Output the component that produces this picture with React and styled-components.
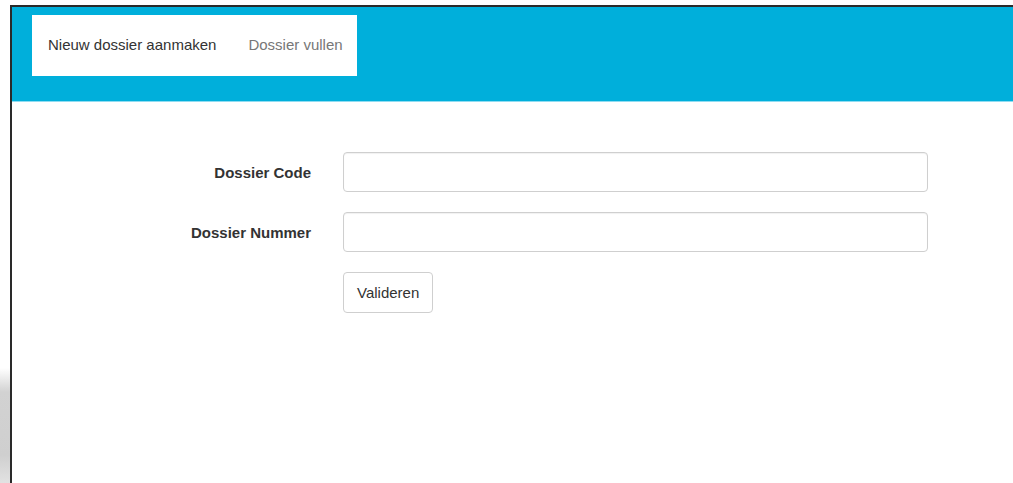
import React, { useState } from "react";
import styled, { createGlobalStyle } from "styled-components";

const GlobalStyle = createGlobalStyle`
    html, body {
        margin: 0;
        padding: 0;
        background: #fff;
    }
    body {
        font-family: "Liberation Sans", Arial, Helvetica, sans-serif;
        font-size: 15px;
        color: #333;
    }
    * {
        box-sizing: border-box;
    }
`;

function App() {
    const [dossierCode, setDossierCode] = useState("");
    const [dossierNummer, setDossierNummer] = useState("");

    const onValidate = (e) => {
        e.preventDefault();
    };

    return (
        <>
            <GlobalStyle />
            <Screen>
                <Gutter />
                <Frame>
                    <Header>
                        <Nav>
                            <NavLink href="#" $active>
                                Nieuw dossier aanmaken
                            </NavLink>
                            <NavLink href="#">Dossier vullen</NavLink>
                        </Nav>
                    </Header>

                    <Form onSubmit={onValidate}>
                        <Label htmlFor="dossier-code">Dossier Code</Label>
                        <Input
                            id="dossier-code"
                            type="text"
                            value={dossierCode}
                            onChange={(e) => setDossierCode(e.target.value)}
                        />

                        <Label htmlFor="dossier-nummer">Dossier Nummer</Label>
                        <Input
                            id="dossier-nummer"
                            type="text"
                            value={dossierNummer}
                            onChange={(e) => setDossierNummer(e.target.value)}
                        />

                        <ButtonCell>
                            <Button type="submit">Valideren</Button>
                        </ButtonCell>
                    </Form>
                </Frame>
            </Screen>
        </>
    );
}

const Screen = styled.div`
    display: flex;
    height: 483px;
    overflow: hidden;
`;
const Gutter = styled.div`
    flex: 0 0 10px;
    background: linear-gradient(
        to bottom,
        #fff 0,
        #fff 368px,
        #d2d2d2 392px,
        #cfcfcf 455px,
        #e2e2e2 483px
    );
`;
const Frame = styled.div`
    flex: 1;
    margin-top: 5px;
    border-top: 2px solid #2a2a2a;
    border-left: 2px solid #2a2a2a;
    background: #fff;
`;
const Header = styled.div`
    height: 95px;
    padding: 8px 0 0 20px;
    background: #00afdb;
    border-bottom: 1px solid #8fdcf1;
`;
const Nav = styled.nav`
    display: inline-flex;
    align-items: center;
    height: 61px;
    padding: 0 0 2px;
    background: #fff;
`;
const NavLink = styled.a`
    padding: 0 16px;
    font-size: 15px;
    color: ${(p) => (p.$active ? "#333" : "#777")};
    text-decoration: none;
    &:last-child {
        padding-right: 14px;
    }
    &:hover {
        color: #333;
    }
`;
const Form = styled.form`
    display: grid;
    grid-template-columns: 299px 585px;
    column-gap: 32px;
    row-gap: 20px;
    align-items: center;
    padding-top: 50px;
`;
const Label = styled.label`
    text-align: right;
    font-weight: bold;
    font-size: 15px;
    color: #333;
`;
const Input = styled.input`
    width: 100%;
    height: 40px;
    padding: 6px 12px;
    font-family: inherit;
    font-size: 15px;
    color: #555;
    border: 1px solid #cfcfcf;
    border-radius: 4px;
    box-shadow: inset 0 1px 1px rgba(0, 0, 0, 0.06);
    outline: none;
    &:focus {
        border-color: #66afe9;
    }
`;
const ButtonCell = styled.div`
    grid-column: 2;
`;
const Button = styled.button`
    height: 41px;
    padding: 0 13px;
    font-family: inherit;
    font-size: 15px;
    color: #333;
    background: #fff;
    border: 1px solid #cfcfcf;
    border-radius: 4px;
    cursor: pointer;
    &:hover {
        background: #e6e6e6;
    }
`;

export default App;
